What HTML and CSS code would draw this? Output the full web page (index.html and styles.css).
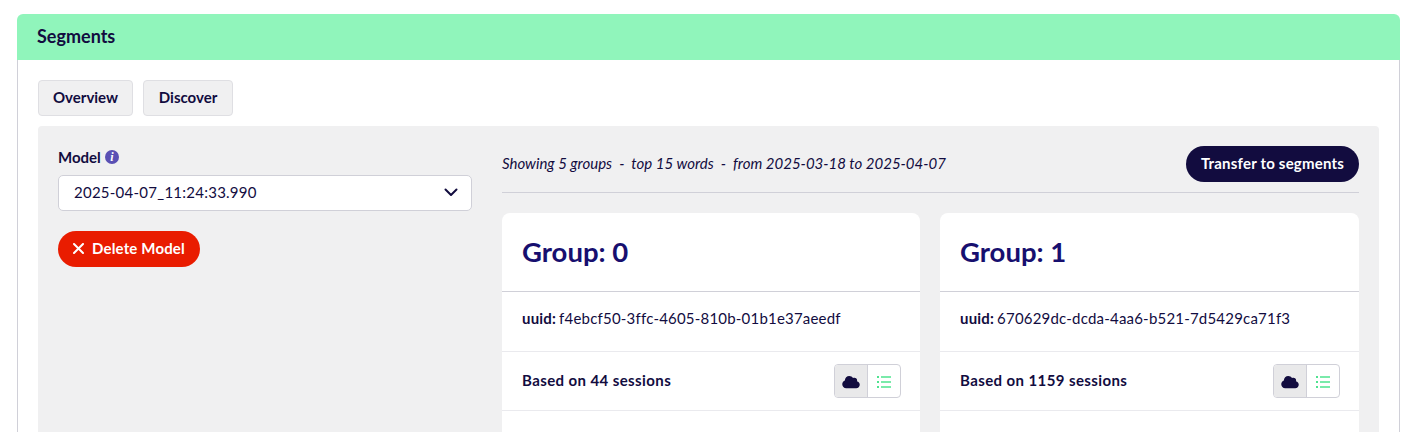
FILE: index.html
```html
<!DOCTYPE html>
<html lang="en">
  <head>
    <meta charset="UTF-8" />
    <title>Segments</title>
    <link rel="stylesheet" href="styles.css">
  </head>
  <body>
    <section class="panel">
      <h1 class="panel-title">Segments</h1>
      <div class="panel-body">
        <nav class="tabs">
          <a class="tab">Overview</a>
          <a class="tab">Discover</a>
        </nav>
        <div class="workspace">

          <aside class="sidebar">
            <div class="field-label">
              <span>Model</span>
              <span class="info">i</span>
            </div>
            <div class="select">
              <span>2025-04-07_11:24:33.990</span>
              <svg class="chevron" viewBox="0 0 14 9" width="14" height="9"><path d="M1.5 1.5 7 7l5.5-5.5" fill="none" stroke="#120c3f" stroke-width="2" stroke-linecap="round" stroke-linejoin="round"/></svg>
            </div>
            <button class="btn-delete">
              <svg viewBox="0 0 11 11" width="11" height="11"><path d="M1 1l9 9M10 1l-9 9" stroke="#fff" stroke-width="2" stroke-linecap="round"/></svg>
              <span>Delete Model</span>
            </button>
          </aside>

          <main class="results">
            <div class="results-head">
              <p class="summary">Showing 5 groups &nbsp;-&nbsp; top 15 words &nbsp;-&nbsp; from 2025-03-18 to 2025-04-07</p>
              <button class="btn-transfer">Transfer to segments</button>
            </div>
            <div class="groups">

              <article class="group">
                <h2 class="group-title">Group: 0</h2>
                <div class="group-uuid"><b>uuid:</b> f4ebcf50-3ffc-4605-810b-01b1e37aeedf</div>
                <div class="group-sessions">
                  <b>Based on 44 sessions</b>
                  <div class="toggle">
                    <span class="toggle-item active">
                      <svg viewBox="0 0 640 512" width="18" height="14"><path fill="#120c3f" d="M0 336c0 79.5 64.5 144 144 144H512c70.7 0 128-57.3 128-128c0-61.9-44-113.6-102.4-125.4c4.1-10.7 6.4-22.4 6.4-34.6c0-53-43-96-96-96c-19.7 0-38.1 6-53.3 16.2C367 64.2 315.3 32 256 32C167.6 32 96 103.6 96 192c0 2.7 .1 5.4 .2 8.1C40.2 219.8 0 273.2 0 336z"/></svg>
                    </span>
                    <span class="toggle-item">
                      <svg viewBox="0 0 14 12" width="14" height="12"><path fill="#4fe38f" d="M0 0h2v2H0zM0 5h2v2H0zM0 10h2v2H0zM4 .2h10v1.6H4zM4 5.2h10v1.6H4zM4 10.2h10v1.6H4z"/></svg>
                    </span>
                  </div>
                </div>
                <div class="group-words"></div>
              </article>

              <article class="group">
                <h2 class="group-title">Group: 1</h2>
                <div class="group-uuid"><b>uuid:</b> 670629dc-dcda-4aa6-b521-7d5429ca71f3</div>
                <div class="group-sessions">
                  <b>Based on 1159 sessions</b>
                  <div class="toggle">
                    <span class="toggle-item active">
                      <svg viewBox="0 0 640 512" width="18" height="14"><path fill="#120c3f" d="M0 336c0 79.5 64.5 144 144 144H512c70.7 0 128-57.3 128-128c0-61.9-44-113.6-102.4-125.4c4.1-10.7 6.4-22.4 6.4-34.6c0-53-43-96-96-96c-19.7 0-38.1 6-53.3 16.2C367 64.2 315.3 32 256 32C167.6 32 96 103.6 96 192c0 2.7 .1 5.4 .2 8.1C40.2 219.8 0 273.2 0 336z"/></svg>
                    </span>
                    <span class="toggle-item">
                      <svg viewBox="0 0 14 12" width="14" height="12"><path fill="#4fe38f" d="M0 0h2v2H0zM0 5h2v2H0zM0 10h2v2H0zM4 .2h10v1.6H4zM4 5.2h10v1.6H4zM4 10.2h10v1.6H4z"/></svg>
                    </span>
                  </div>
                </div>
                <div class="group-words"></div>
              </article>

            </div>
          </main>

        </div>
      </div>
    </section>
  </body>
</html>
```

FILE: styles.css
```css
html, body {
  height: 432px;
  overflow: hidden;
}

body {
  margin: 0;
  padding: 14px 19px 0 17px;
  background: #fff;
  font-family: 'Lato', sans-serif;
  font-size: 15px;
  color: #120c3f;
}

b {
  font-weight: 700;
}

.panel {
  border-radius: 6px 6px 0 0;
}
.panel-title {
  margin: 0;
  height: 46px;
  box-sizing: border-box;
  padding: 0 20px 2px;
  display: flex;
  align-items: center;
  background: #90f5bb;
  border-radius: 6px 6px 0 0;
  font-size: 18px;
  font-weight: 700;
}
.panel-body {
  padding: 20px 20px 0;
  border: 1px solid #d0d0d8;
  border-top: none;
  height: 600px;
}

.tabs {
  display: flex;
  gap: 10px;
  margin-bottom: 10px;
}
.tab {
  height: 36px;
  min-width: 90px;
  justify-content: center;
  box-sizing: border-box;
  padding: 0 14px 2px;
  display: flex;
  align-items: center;
  background: #f0f0f1;
  border: 1px solid #dfdfe3;
  border-radius: 4px;
  font-weight: 700;
  font-size: 15px;
}

.workspace {
  display: flex;
  gap: 30px;
  padding: 20px;
  background: #f0f0f1;
  border-radius: 4px 4px 0 0;
  height: 600px;
}

.sidebar {
  width: 414px;
  flex: none;
}
.field-label {
  display: flex;
  align-items: center;
  gap: 4px;
  height: 24px;
  box-sizing: border-box;
  padding-bottom: 2px;
  margin-bottom: 5px;
  font-weight: 700;
  font-size: 15px;
}
.info {
  width: 14px;
  height: 14px;
  display: flex;
  align-items: center;
  justify-content: center;
  border-radius: 50%;
  background: #5a50b4;
  color: #fff;
  font-family: 'Liberation Serif', serif;
  font-style: italic;
  font-weight: 700;
  font-size: 12px;
}
.select {
  height: 36px;
  box-sizing: border-box;
  padding: 0 13px 2px 15px;
  display: flex;
  align-items: center;
  justify-content: space-between;
  background: #fff;
  border: 1px solid #d0d0d8;
  border-radius: 5px;
  font-size: 15px;
  letter-spacing: 0.25px;
}
.btn-delete {
  margin-top: 20px;
  height: 36px;
  width: 142px;
  display: flex;
  align-items: center;
  justify-content: center;
  gap: 8px;
  padding: 0 0 2px;
  border: none;
  border-radius: 18px;
  background: #e91c00;
  color: #fff;
  font-family: inherit;
  font-size: 15px;
  font-weight: 700;
  letter-spacing: 0.15px;
}

.results {
  flex: 1;
  min-width: 0;
}
.results-head {
  display: flex;
  align-items: center;
  justify-content: space-between;
  padding-bottom: 10px;
  border-bottom: 1px solid #d0d0d8;
  margin-bottom: 20px;
}
.summary {
  margin: 0 0 2px;
  font-style: italic;
  font-size: 15px;
}
.btn-transfer {
  height: 36px;
  width: 173px;
  padding: 0 0 2px;
  border: none;
  border-radius: 18px;
  background: #120c3f;
  color: #fff;
  font-family: inherit;
  font-size: 15px;
  font-weight: 700;
  letter-spacing: 0.2px;
}

.groups {
  display: grid;
  grid-template-columns: 418px 419px;
  gap: 20px;
}
.group {
  background: #fff;
  border-radius: 8px 8px 0 0;
}
.group-title {
  margin: 0;
  height: 79px;
  box-sizing: border-box;
  padding: 0 20px 2px;
  display: flex;
  align-items: center;
  border-bottom: 1px solid #d0d0d8;
  font-size: 27.5px;
  font-weight: 700;
  color: #170f6f;
}
.group-uuid {
  height: 60px;
  box-sizing: border-box;
  padding: 0 20px 7px;
  display: flex;
  align-items: center;
  gap: 3px;
  border-bottom: 1px solid #eaeaee;
  letter-spacing: 0.2px;
}
.group-sessions {
  height: 59px;
  box-sizing: border-box;
  padding: 0 19.5px 0 20px;
  display: flex;
  align-items: center;
  justify-content: space-between;
  border-bottom: 1px solid #eaeaee;
}
.group-sessions b {
  letter-spacing: 0.4px;
  padding-bottom: 2px;
}
.group-words {
  height: 100px;
}

.toggle {
  display: flex;
  height: 34px;
  box-sizing: border-box;
  border: 1px solid #d0d0d8;
  border-radius: 4px;
  overflow: hidden;
}
.toggle-item {
  width: 32px;
  box-sizing: border-box;
  display: flex;
  align-items: center;
  justify-content: center;
  padding-top: 1px;
}
.toggle-item.active {
  width: 33px;
  background: #e9e9ea;
  border-right: 1px solid #d0d0d8;
}
```
